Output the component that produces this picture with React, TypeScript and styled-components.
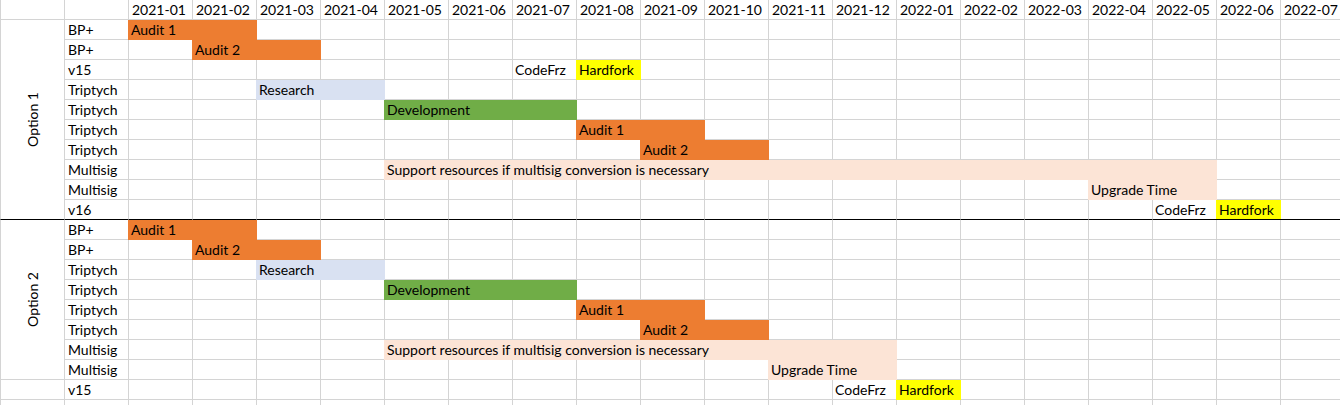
import React from "react";
import styled, { createGlobalStyle } from "styled-components";

const GRID = "#d4d4d4";

const GlobalStyle = createGlobalStyle`
  html, body {
    margin: 0;
    padding: 0;
    background: #fff;
    overflow: hidden;
  }
  body {
    font-family: "Lato", "Liberation Sans", sans-serif;
    color: #000;
  }
`;

const Sheet = styled.div`
  display: grid;
  grid-template-columns: repeat(21, 64px);
  grid-auto-rows: 20px;
  width: 1344px;
  font-size: 14px;
  line-height: 19px;
`;

const Cell = styled.div<{ $row: number; $col: number; $sep?: boolean }>`
  grid-row: ${(p) => p.$row};
  grid-column: ${(p) => p.$col};
  box-sizing: border-box;
  border-left: 1px solid ${GRID};
  border-bottom: 1px solid ${(p) => (p.$sep ? "#000" : GRID)};
  padding: 0 0 0 3px;
  white-space: nowrap;
  overflow: visible;
`;

const GroupCell = styled.div<{ $row: number; $span: number; $sep?: boolean }>`
  grid-row: ${(p) => p.$row} / span ${(p) => p.$span};
  grid-column: 1;
  box-sizing: border-box;
  border-left: 1px solid ${GRID};
  border-bottom: 1px solid ${(p) => (p.$sep ? "#000" : GRID)};
  display: flex;
  align-items: center;
  justify-content: center;
`;

const GroupLabel = styled.span`
  writing-mode: vertical-rl;
  transform: rotate(180deg);
  white-space: nowrap;
`;

const Bar = styled.div<{
  $row: number;
  $col: number;
  $span: number;
  $fill: string;
  $sep?: boolean;
}>`
  grid-row: ${(p) => p.$row};
  grid-column: ${(p) => p.$col} / span ${(p) => p.$span};
  z-index: 1;
  box-sizing: border-box;
  margin-right: -1px;
  background: ${(p) => p.$fill};
  border-bottom: ${(p) => (p.$sep ? "1px solid #000" : "none")};
  padding: 0 0 0 3px;
  white-space: nowrap;
`;

const Note = styled.div<{ $row: number; $col: number }>`
  grid-row: ${(p) => p.$row};
  grid-column: ${(p) => p.$col};
  z-index: 1;
  padding: 0 0 0 3px;
  white-space: nowrap;
`;

const ORANGE = "#ed7d31";
const BLUE = "#d9e1f2";
const GREEN = "#70ad47";
const PEACH = "#fce4d6";
const YELLOW = "#ffff00";

const months = Array.from({ length: 19 }, (_, i) => {
  const y = 2021 + Math.floor(i / 12);
  const m = (i % 12) + 1;
  return `${y}-${String(m).padStart(2, "0")}`;
});

type Task = { start: number; len: number; text: string; fill?: string };
type Row = { label: string; tasks: Task[] };

const option1: Row[] = [
  { label: "BP+", tasks: [{ start: 0, len: 2, text: "Audit 1", fill: ORANGE }] },
  { label: "BP+", tasks: [{ start: 1, len: 2, text: "Audit 2", fill: ORANGE }] },
  {
    label: "v15",
    tasks: [
      { start: 6, len: 1, text: "CodeFrz" },
      { start: 7, len: 1, text: "Hardfork", fill: YELLOW },
    ],
  },
  { label: "Triptych", tasks: [{ start: 2, len: 2, text: "Research", fill: BLUE }] },
  { label: "Triptych", tasks: [{ start: 4, len: 3, text: "Development", fill: GREEN }] },
  { label: "Triptych", tasks: [{ start: 7, len: 2, text: "Audit 1", fill: ORANGE }] },
  { label: "Triptych", tasks: [{ start: 8, len: 2, text: "Audit 2", fill: ORANGE }] },
  {
    label: "Multisig",
    tasks: [
      {
        start: 4,
        len: 13,
        text: "Support resources if multisig conversion is necessary",
        fill: PEACH,
      },
    ],
  },
  { label: "Multisig", tasks: [{ start: 15, len: 2, text: "Upgrade Time", fill: PEACH }] },
  {
    label: "v16",
    tasks: [
      { start: 16, len: 1, text: "CodeFrz" },
      { start: 17, len: 1, text: "Hardfork", fill: YELLOW },
    ],
  },
];

const option2: Row[] = [
  { label: "BP+", tasks: [{ start: 0, len: 2, text: "Audit 1", fill: ORANGE }] },
  { label: "BP+", tasks: [{ start: 1, len: 2, text: "Audit 2", fill: ORANGE }] },
  { label: "Triptych", tasks: [{ start: 2, len: 2, text: "Research", fill: BLUE }] },
  { label: "Triptych", tasks: [{ start: 4, len: 3, text: "Development", fill: GREEN }] },
  { label: "Triptych", tasks: [{ start: 7, len: 2, text: "Audit 1", fill: ORANGE }] },
  { label: "Triptych", tasks: [{ start: 8, len: 2, text: "Audit 2", fill: ORANGE }] },
  {
    label: "Multisig",
    tasks: [
      {
        start: 4,
        len: 8,
        text: "Support resources if multisig conversion is necessary",
        fill: PEACH,
      },
    ],
  },
  { label: "Multisig", tasks: [{ start: 10, len: 2, text: "Upgrade Time", fill: PEACH }] },
  {
    label: "v15",
    tasks: [
      { start: 11, len: 1, text: "CodeFrz" },
      { start: 12, len: 1, text: "Hardfork", fill: YELLOW },
    ],
  },
  { label: "", tasks: [] },
];

// rows 2-11: option 1 (merged over all 10), rows 12-21: option 2 (merged over first 8)
const groups = [
  { title: "Option 1", firstRow: 2, span: 10, rows: option1, sepRow: 11 },
  { title: "Option 2", firstRow: 12, span: 8, rows: option2, sepRow: -1 },
];

function App() {
  const items: React.ReactNode[] = [];

  items.push(<Cell key="h0" $row={1} $col={1} />, <Cell key="h1" $row={1} $col={2} />);
  months.forEach((m, i) =>
    items.push(
      <Cell key={`hm${i}`} $row={1} $col={i + 3}>
        {m}
      </Cell>
    )
  );

  groups.forEach((g) => {
    items.push(
      <GroupCell
        key={g.title}
        $row={g.firstRow}
        $span={g.span}
        $sep={g.firstRow + g.span - 1 === g.sepRow}
      >
        <GroupLabel>{g.title}</GroupLabel>
      </GroupCell>
    );
    g.rows.forEach((r, ri) => {
      const row = g.firstRow + ri;
      const sep = row === g.sepRow;
      if (ri >= g.span) {
        items.push(<Cell key={`g${row}`} $row={row} $col={1} $sep={sep} />);
      }
      items.push(
        <Cell key={`l${row}`} $row={row} $col={2} $sep={sep}>
          {r.label}
        </Cell>
      );
      months.forEach((_, i) =>
        items.push(<Cell key={`c${row}-${i}`} $row={row} $col={i + 3} $sep={sep} />)
      );
      r.tasks.forEach((t, ti) =>
        items.push(
          t.fill ? (
            <Bar
              key={`t${row}-${ti}`}
              $row={row}
              $col={t.start + 3}
              $span={t.len}
              $fill={t.fill}
              $sep={sep}
            >
              {t.text}
            </Bar>
          ) : (
            <Note key={`t${row}-${ti}`} $row={row} $col={t.start + 3}>
              {t.text}
            </Note>
          )
        )
      );
    });
  });

  return (
    <>
      <GlobalStyle />
      <Sheet>{items}</Sheet>
    </>
  );
}

export default App;
